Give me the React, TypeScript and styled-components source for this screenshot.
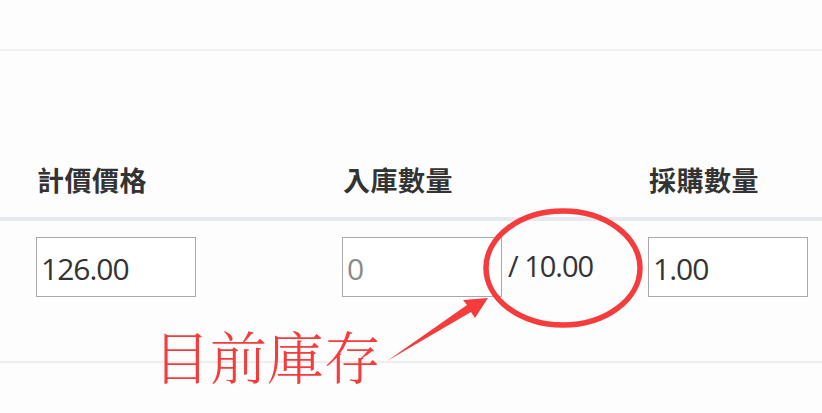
import React from 'react'
import styled, { createGlobalStyle } from 'styled-components'

const GlobalStyle = createGlobalStyle`
  html, body {
    margin: 0;
    padding: 0;
    background: #fdfdfd;
  }
  body {
    font-family: "Noto Sans CJK TC", "Noto Sans", sans-serif;
    color: #333;
  }
`

const Page = styled.div`
  position: relative;
  width: 822px;
  height: 413px;
  overflow: hidden;
  background: #fdfdfd;
`
const TopBar = styled.div`
  height: 49px;
  border-bottom: 2px solid #eef0f4;
`
const Table = styled.div`
  display: grid;
  grid-template-columns: repeat(3, 306px);
  padding-left: 36px;
  width: max-content;
`
const HeadCell = styled.div`
  height: 166px;
  box-sizing: border-box;
  display: flex;
  align-items: flex-end;
  padding-bottom: 18px;
  padding-left: 1px;
  font-size: 27px;
  font-weight: 700;
  letter-spacing: 0.5px;
  color: #333;
`
const HeadRule = styled.div`
  grid-column: 1 / -1;
  margin-left: -36px;
  height: 4px;
  background: #e6eaee;
`
const BodyCell = styled.div`
  height: 140px;
  box-sizing: border-box;
  padding-top: 16px;
  display: flex;
  align-items: flex-start;
`
const BodyRule = styled.div`
  height: 2px;
  background: #eeeeee;
`
const Field = styled.input`
  width: 160px;
  height: 60px;
  box-sizing: border-box;
  border: 1px solid #a9a9a9;
  background: #fff;
  padding: 2px 4px 0;
  font-family: "Open Sans", sans-serif;
  font-size: 30px;
  letter-spacing: -1px;
  color: #333;
  outline: none;
  &::placeholder {
    color: #8a8a8a;
  }
`
const Stock = styled.span`
  margin-left: 6px;
  margin-top: 9px;
  font-family: "Open Sans", sans-serif;
  font-size: 29px;
  letter-spacing: -1px;
  color: #333;
`
const Note = styled.div`
  position: absolute;
  left: 153px;
  top: 318px;
  font-family: "Noto Serif CJK TC", "Noto Sans CJK TC", serif;
  font-weight: 300;
  font-size: 57px;
  line-height: 72px;
  color: #f53b3b;
  letter-spacing: 0;
`
const Marks = styled.svg`
  position: absolute;
  left: 0;
  top: 0;
  pointer-events: none;
`

const App: React.FC = () => {
  return (
    <Page>
      <GlobalStyle />
      <TopBar />
      <Table>
        <HeadCell>計價價格</HeadCell>
        <HeadCell>入庫數量</HeadCell>
        <HeadCell>採購數量</HeadCell>
        <HeadRule />
        <BodyCell>
          <Field defaultValue="126.00" />
        </BodyCell>
        <BodyCell>
          <Field placeholder="0" />
          <Stock>/ 10.00</Stock>
        </BodyCell>
        <BodyCell>
          <Field defaultValue="1.00" />
        </BodyCell>
      </Table>
      <BodyRule />
      <Note>目前庫存</Note>
      <Marks width="822" height="413" viewBox="0 0 822 413">
        <ellipse cx="563" cy="268" rx="77" ry="57" fill="none" stroke="#f53b3b" strokeWidth="5.5" />
        <polygon points="387,361 467,305 463,300 488,298 475,318 471,312" fill="#f53b3b" />
      </Marks>
    </Page>
  )
}

export default App
